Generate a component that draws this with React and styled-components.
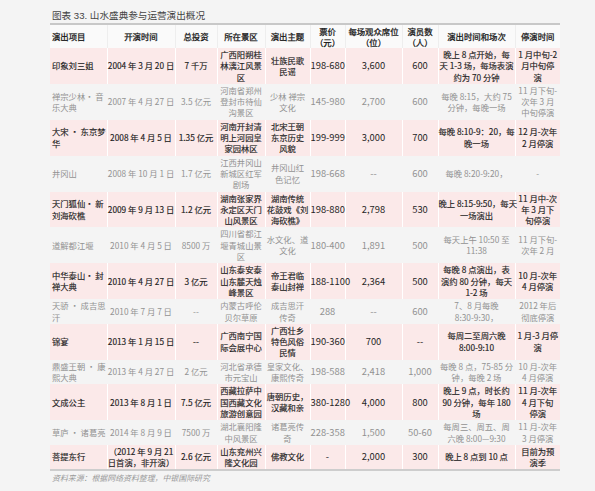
import React from 'react';
import styled, { createGlobalStyle } from 'styled-components';

const Global = createGlobalStyle`
  html, body { margin: 0; padding: 0; background: #f4f4f4; }
  body { font-family: "Liberation Sans Narrow", "Noto Sans CJK SC", sans-serif; }
`;

const Page = styled.div`
  width: 595px;
  height: 491px;
  box-sizing: border-box;
  padding: 8px 35px 0 50px;
  background: #f4f4f4;
  overflow: hidden;
`;

const Title = styled.div`
  font-family: "Liberation Sans", "Noto Sans CJK SC", sans-serif;
  font-size: 9.6px;
  line-height: 15px;
  height: 15px;
  color: #444444;
  padding-left: 2px;
`;

const Table = styled.table`
  border-collapse: collapse;
  table-layout: fixed;
  width: 510px;
  border-top: 2px solid #c8c8c8;
  border-bottom: 2px solid #cdcdcd;
`;

const HeadRow = styled.tr`
  background: #fafafa;
  height: 24px;
`;

const HeadCell = styled.th`
  font-size: 8.4px;
  line-height: 11px;
  font-weight: 400;
  -webkit-text-stroke: 0.25px #141414;
  color: #141414;
  white-space: nowrap;
  padding: 0 1px;
  text-align: ${p => (p.$left ? 'left' : 'center')};
  padding-left: ${p => (p.$left ? '2px' : '1px')};
  border-right: 1px solid #eeeeee;
  &:last-child { border-right: none; }
`;

const Row = styled.tr`
  background: ${p => (p.$hi ? '#fbe9e9' : '#f4f4f4')};
`;

const Cell = styled.td`
  line-height: 11.3px;
  padding: 1px 0;
  white-space: nowrap;
  vertical-align: middle;
  text-align: ${p => (p.$left ? 'left' : 'center')};
  padding-left: ${p => (p.$left ? '2px' : '0')};
  color: ${p => (p.$hi ? (p.$plain ? '#262626' : '#1e1e1e') : '#929292')};
  font-weight: 400;
  -webkit-text-stroke: ${p => (p.$hi && !p.$plain ? '0.15px #1e1e1e' : '0')};
  font-size: ${p => (p.$plain ? '9.4px' : '8.3px')};
  border-right: 1px solid ${p => (p.$hi ? '#ffffff' : '#f4f4f4')};
  &:last-child { border-right: none; }
`;

const Source = styled.div`
  font-family: "Noto Sans CJK SC", sans-serif;
  font-style: italic;
  font-size: 7.9px;
  line-height: 12px;
  color: #9a9a9a;
  padding: 1px 0 0 2px;
`;

const widths = [57, 68, 42, 48, 45, 35, 57, 36, 77, 45];

const headers = [
  '演出项目', '开演时间', '总投资', '所在景区', '演出主题',
  '票价\n（元）', '每场观众席位\n（位）', '演员数\n（人）', '演出时间和场次', '停演时间',
];

const rows = [
  { hi: true, c: ['印象刘三姐', '2004 年 3 月 20 日', '7 千万', '广西阳朔桂\n林漓江风景\n区', '壮族民歌\n民谣', '198-680', '3,600', '600', '晚上 8 点开始，每\n天 1-3 场，每场表演\n约为 70 分钟', '1 月中旬-2\n月中旬停\n演'] },
  { hi: false, c: ['禅宗少林· 音\n乐大典', '2007 年 4 月 27 日', '3.5 亿元', '河南省郑州\n登封市待仙\n沟景区', '少林 禅宗\n文化', '145-980', '2,700', '600', '每晚 8:15，大约 75\n分钟，每晚一场', '11 月下旬-\n次年 3 月\n中旬停演'] },
  { hi: true, c: ['大宋 · 东京梦\n华', '2008 年 4 月 5 日', '1.35 亿元', '河南开封清\n明上河园皇\n家园林区', '北宋王朝\n东京历史\n风貌', '199-999', '3,000', '700', '每晚 8:10-9：20，每\n晚一场', '12 月-次年\n2 月停演'] },
  { hi: false, c: ['井冈山', '2008 年 10 月 1 日', '1.7 亿元', '江西井冈山\n新城区红军\n剧场', '井冈山红\n色记忆', '198-668', '--', '600', '每晚 8:20-9:20，', '-'] },
  { hi: true, c: ['天门狐仙· 新\n刘海砍樵', '2009 年 9 月 13 日', '1.2 亿元', '湖南张家界\n永定区天门\n山风景区', '湖南传统\n花鼓戏《刘\n海砍樵》', '198-880', '2,798', '530', '晚上 8:15-9:50，每天\n一场演出', '11 月中-次\n年 3 月下\n旬停演'] },
  { hi: false, c: ['道解都江堰', '2010 年 4 月 5 日', '8500 万', '四川省都江\n堰青城山景\n区', '水文化、道\n文化', '180-400', '1,891', '500', '每天上午 10:50 至\n11:38', '11 月下旬-\n次年 2 月'] },
  { hi: true, c: ['中华泰山· 封\n禅大典', '2010 年 4 月 27 日', '3 亿元', '山东泰安泰\n山东麓天烛\n峰景区', '帝王君临\n泰山封禅', '188-1100', '2,364', '500', '每晚 8 点演出，表\n演约 80 分钟，每天\n1-2 场', '10 月-次年\n4 月停演'] },
  { hi: false, c: ['天骄 · 成吉思\n汗', '2010 年 7 月 7 日', '--', '内蒙古呼伦\n贝尔草原', '成吉思汗\n传奇', '288', '--', '600', '7、8 月每晚\n8:30-9:30，', '2012 年后\n彻底停演'] },
  { hi: true, c: ['锦宴', '2013 年 1 月 15 日', '--', '广西南宁国\n际会展中心', '广西壮乡\n特色风俗\n民情', '190-360', '700', '--', '每周二至周六晚\n8:00-9:10', '1 月-3 月停\n演'] },
  { hi: false, c: ['鼎盛王朝 · 康\n熙大典', '2013 年 4 月 27 日', '2 亿元', '河北省承德\n市元宝山', '皇家文化、\n康熙传奇', '198-588', '2,418', '1,000', '每晚 8 点，75-85 分\n钟，每晚 2 场', '10 月-次年\n4 月停演'] },
  { hi: true, c: ['文成公主', '2013 年 8 月 1 日', '7.5 亿元', '西藏拉萨中\n国西藏文化\n旅游创意园', '唐朝历史，\n汉藏和亲', '380-1280', '4,000', '800', '晚上 9 点，时长约\n90 分钟，每年 180\n场', '11 月-次年\n4 月下旬\n停演'] },
  { hi: false, c: ['草庐 · 诸葛亮', '2014 年 8 月 9 日', '7500 万', '湖北襄阳隆\n中风景区', '诸葛亮传\n奇', '228-358', '1,500', '50-60', '每周三、周五、周\n六晚 8:00—9:30', '11 月-次年\n3 月停演'] },
  { hi: true, c: ['菩提东行', '（2012 年 9 月 21\n日首演，非开演）', '2.6 亿元', '山东兖州兴\n隆文化园', '佛教文化', '-', '2,000', '300', '晚上 8 点到 10 点', '目前为预\n演季'] },
];

const plainCols = [5, 6, 7];

const Lines = ({ text }) => {
  const parts = text.split('\n');
  return parts.map((p, i) => (
    <React.Fragment key={i}>
      {p}
      {i < parts.length - 1 && <br />}
    </React.Fragment>
  ));
};

export default function App() {
  return (
    <>
      <Global />
      <Page>
        <Title>图表 33. 山水盛典参与运营演出概况</Title>
        <Table>
          <colgroup>
            {widths.map((w, i) => (
              <col key={i} style={{ width: w }} />
            ))}
          </colgroup>
          <thead>
            <HeadRow>
              {headers.map((h, i) => (
                <HeadCell key={i} $left={i === 0}>
                  <Lines text={h} />
                </HeadCell>
              ))}
            </HeadRow>
          </thead>
          <tbody>
            {rows.map((r, ri) => (
              <Row key={ri} $hi={r.hi}>
                {r.c.map((t, ci) => (
                  <Cell key={ci} $hi={r.hi} $left={ci === 0} $plain={plainCols.includes(ci)}>
                    <Lines text={t} />
                  </Cell>
                ))}
              </Row>
            ))}
          </tbody>
        </Table>
        <Source>资料来源：根据网络资料整理，中银国际研究</Source>
      </Page>
    </>
  );
}
